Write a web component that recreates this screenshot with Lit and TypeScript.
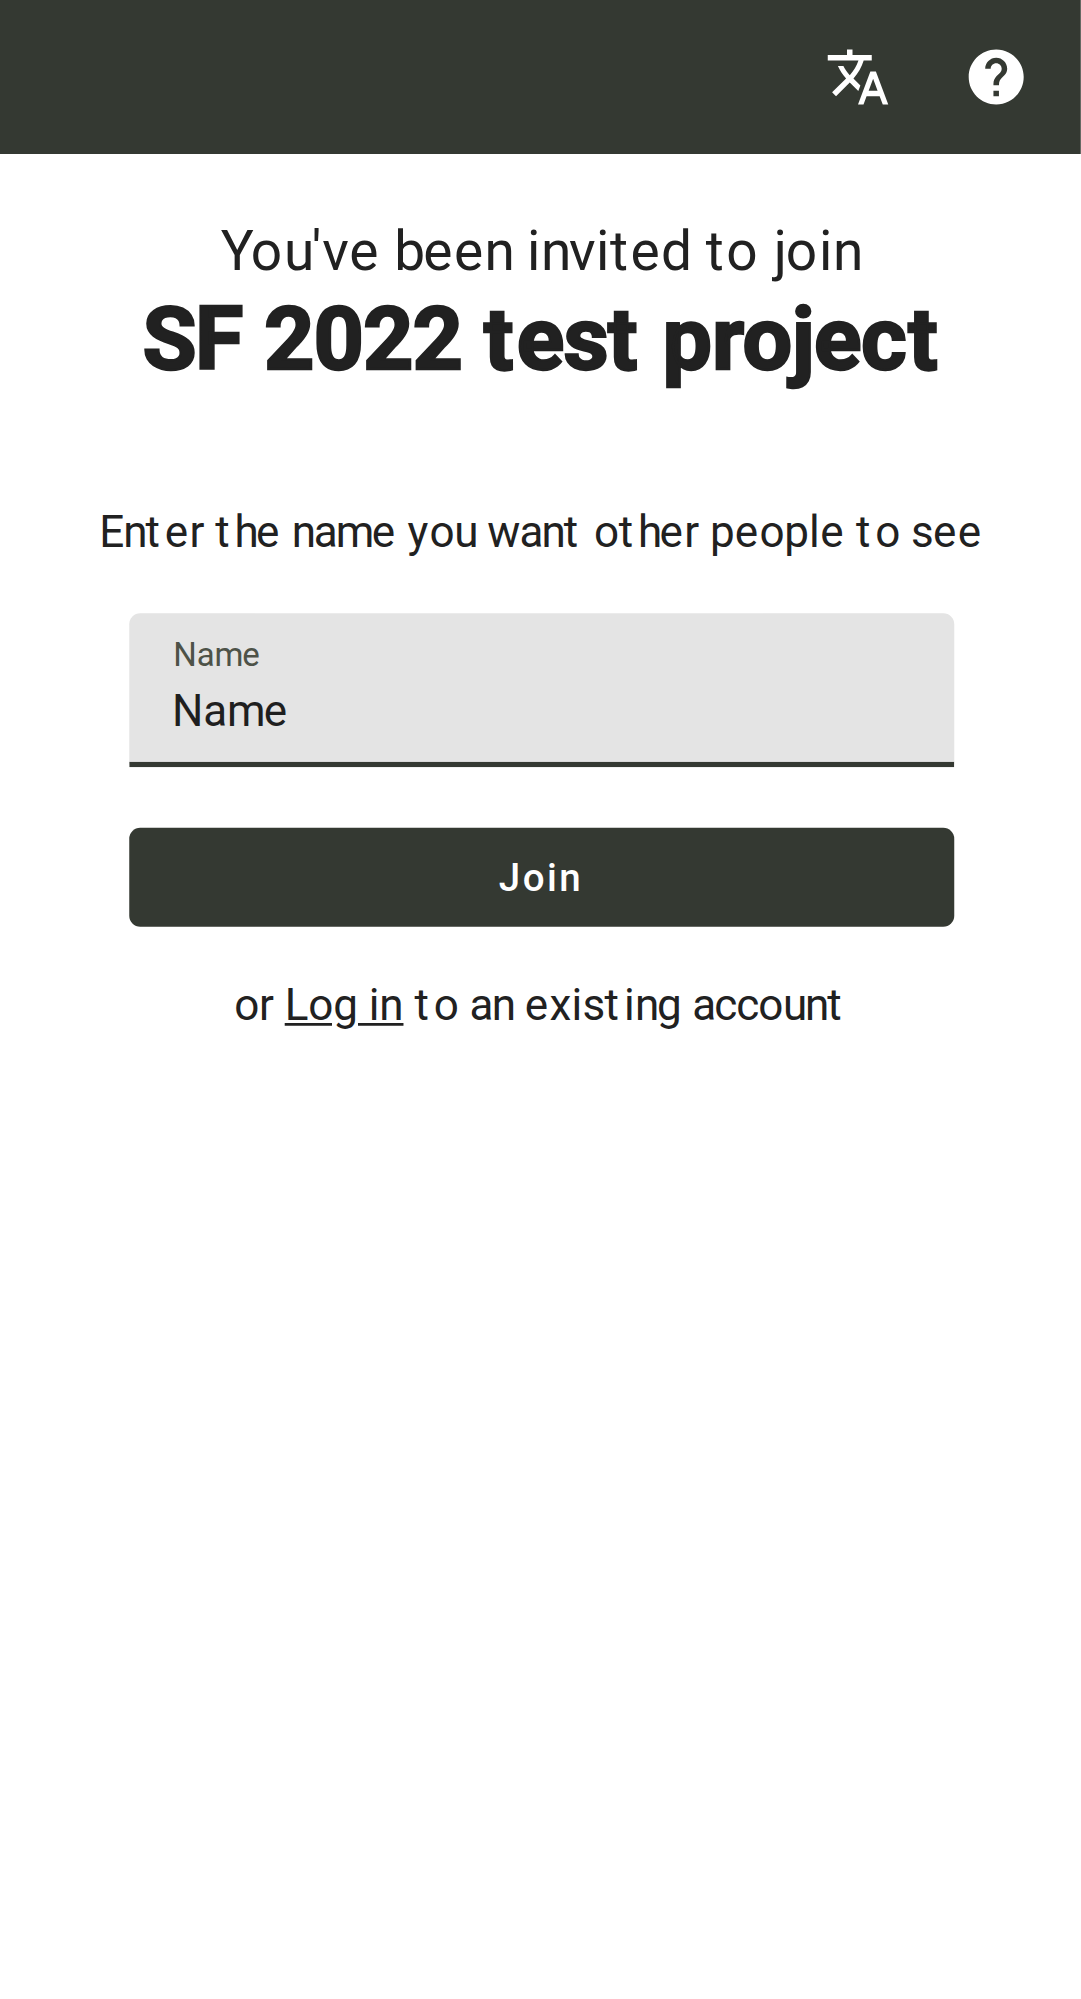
import { LitElement, html, css } from "lit";
import { customElement, property } from "lit/decorators.js";

type Widths = Record<string, number>;

/* Natural glyph advances of Roboto, in font units (2048 per em). */
const REGULAR: Widths = {
  " ": 507, "'": 357, E: 1164, L: 1102, N: 1460, Y: 1230, a: 1114, b: 1149, c: 1072,
  d: 1155, e: 1086, g: 1149, h: 1128, i: 497, j: 489, l: 497, m: 1795, n: 1130,
  o: 1168, p: 1149, r: 693, s: 1057, t: 669, u: 1129, v: 992, w: 1538, x: 1015, y: 969,
};
const BOLD: Widths = {
  " ": 510, "0": 1176, "2": 1176, F: 1122, S: 1244, c: 1072, e: 1102, j: 540,
  o: 1162, p: 1156, r: 748, s: 1049, t: 684,
};

const BODY: Widths = {
  " ": 4, E: 8.8, L: 9, a: 8, c: 8, e: 9, g: 8.8, h: 7.8, i: 4, l: 4, m: 13, n: 8,
  o: 9, p: 9, r: 5.3, s: 8, t: 7, u: 8, w: 11.7, x: 8, y: 8,
};
const LEAD: Widths = {
  " ": 5.2, "'": 3.8, Y: 10.9, b: 10.6, d: 11, e: 11.1, i: 5.1, j: 4.3, n: 10.2,
  o: 12.1, t: 7.4, u: 10.1, v: 9.8,
};
const TITLE: Widths = {
  " ": 8, "0": 18, "2": 18, F: 17.1, S: 18.8, c: 17.2, e: 17, j: 8.2, o: 18, p: 18, r: 11.1, s: 16, t: 11.8,
};
const INPUT: Widths = { N: 11.4, a: 8.6, m: 13.4, e: 9 };

const fitted = (text: string, size: number, fit: Widths, face: Widths = REGULAR) =>
  [...text].map((ch) => {
    const gap = fit[ch] - (face[ch] * size) / 2048;
    return html`<span style="letter-spacing:${gap.toFixed(3)}px">${ch}</span>`;
  });

@customElement("app-bar")
class AppBar extends LitElement {
  static styles = css`
    :host { display: block; }
    .bar {
      display: flex;
      justify-content: flex-end;
      align-items: center;
      gap: 26px;
      height: 56px;
      box-sizing: border-box;
      padding-right: 19px;
      background: #343932;
    }
    .icon { display: block; width: 24px; height: 24px; fill: #fff; }
  `;
  render() {
    return html`
      <header class="bar">
        <svg class="icon" viewBox="0 0 24 24" aria-label="Language">
          <path d="M12.87 15.07l-2.54-2.51.03-.03c1.74-1.94 2.98-4.17 3.71-6.53H17V4h-7V2H8v2H1v1.99h11.17C11.5 7.92 10.44 9.75 9 11.35 8.07 10.32 7.3 9.19 6.69 8h-2c.73 1.63 1.73 3.17 2.98 4.56l-5.09 5.02L4 19l5-5 3.11 3.11.76-2.04zM18.5 10h-2L12 22h2l1.12-3h4.75L21 22h2l-4.5-12zm-2.62 7l1.62-4.33L19.12 17h-3.24z"/>
        </svg>
        <svg class="icon" viewBox="0 0 24 24" aria-label="Help">
          <path transform="translate(0.25 0)" d="M12 2C6.48 2 2 6.48 2 12s4.48 10 10 10 10-4.48 10-10S17.52 2 12 2zm1 17h-2v-2h2v2zm2.07-7.75l-.9.92C13.45 12.9 13 13.5 13 15h-2v-.5c0-1.1.45-2.1 1.17-2.83l1.24-1.26c.37-.36.59-.86.59-1.41 0-1.1-.9-2-2-2s-2 .9-2 2H8c0-2.21 1.79-4 4-4s4 1.79 4 4c0 .88-.36 1.68-.93 2.25z"/>
        </svg>
      </header>
    `;
  }
}

@customElement("text-field")
class TextField extends LitElement {
  @property() label = "";
  @property() value = "";

  static styles = css`
    :host { display: block; }
    .field {
      display: flex;
      flex-direction: column;
      height: 56px;
      box-sizing: border-box;
      padding: 8.6px 16px 0;
      border-bottom: 2px solid #343932;
      border-radius: 4px 4px 0 0;
      background: #e4e4e4;
    }
    .label {
      width: max-content;
      height: 13.4px;
      line-height: 18.4px;
      font-size: 16px;
      transform: translateY(-0.4px) scale(0.75);
      transform-origin: left top;
      color: #4d5248;
    }
    .value { line-height: 28px; font-size: 16px; color: #1f1f1f; }
  `;
  render() {
    return html`
      <div class="field">
        <span class="label">${fitted(this.label, 16, INPUT)}</span>
        <span class="value">${fitted(this.value, 16, INPUT)}</span>
      </div>
    `;
  }
}

@customElement("app-root")
export class AppRoot extends LitElement {
  /* The page is designed at 393 CSS px and enlarged to the device size. */
  static styles = css`
    :host {
      display: block;
      width: 1081px;
      height: 1999px;
      overflow: hidden;
      background: #fff;
    }
    .screen {
      width: 393px;
      height: 727px;
      transform: scale(2.75);
      transform-origin: 0 0;
      font-family: Roboto, sans-serif;
      font-kerning: none;
      white-space: nowrap;
      color: #212121;
    }
    .content {
      display: flex;
      flex-direction: column;
      align-items: center;
      padding-top: 19px;
    }
    .lead { margin: 0; padding-left: 0.4px; font-size: 20px; line-height: 32px; font-weight: 400; }
    .title {
      margin: -3px 0 0;
      padding-left: 1px;
      font-size: 32px;
      line-height: 38px;
      font-weight: 700;
      -webkit-text-stroke: 0.85px #212121;
      transform: translateY(0.35px);
    }
    .prompt, .login { margin: 0; font-size: 16px; line-height: 24px; }
    .prompt { margin-top: 40px; padding-left: 0.4px; }
    .name { width: 300px; margin-top: 17px; }
    .join {
      width: 300px;
      height: 36px;
      margin: 22px 0 0;
      padding: 0;
      border: 0;
      border-radius: 4px;
      background: #343932;
      color: #fff;
      font: 500 14px/36px Roboto, sans-serif;
      letter-spacing: 0.88px;
      text-indent: 0.4px;
    }
    .login { margin-top: 17px; }
    .link { color: inherit; text-decoration: underline; letter-spacing: -0.04px; }
  `;
  render() {
    return html`
      <div class="screen">
        <app-bar></app-bar>
        <main class="content">
          <p class="lead">${fitted("You've been invited to join", 20, LEAD)}</p>
          <h1 class="title">${fitted("SF 2022 test project", 32, TITLE, BOLD)}</h1>
          <p class="prompt">${fitted("Enter the name you want other people to see", 16, BODY)}</p>
          <text-field class="name" label="Name" value="Name"></text-field>
          <button class="join">Join</button>
          <p class="login">${fitted("or ", 16, BODY)}<a class="link" href="#">Log in</a>${fitted(" to an existing account", 16, BODY)}</p>
        </main>
      </div>
    `;
  }
}
